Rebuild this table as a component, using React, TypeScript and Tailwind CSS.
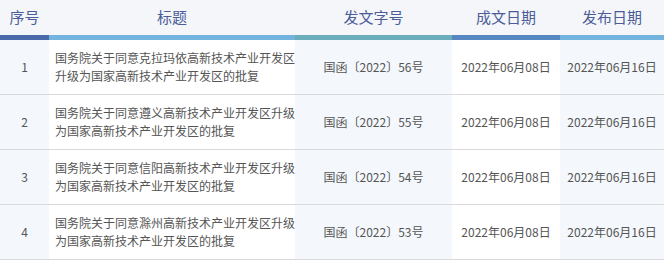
const cols = "grid grid-cols-[49px_246px_157px_108px_104px]";

const rows = [
  { no: 1, title: "国务院关于同意克拉玛依高新技术产业开发区升级为国家高新技术产业开发区的批复", doc: "国函〔2022〕56号" },
  { no: 2, title: "国务院关于同意遵义高新技术产业开发区升级为国家高新技术产业开发区的批复", doc: "国函〔2022〕55号" },
  { no: 3, title: "国务院关于同意信阳高新技术产业开发区升级为国家高新技术产业开发区的批复", doc: "国函〔2022〕54号" },
  { no: 4, title: "国务院关于同意滁州高新技术产业开发区升级为国家高新技术产业开发区的批复", doc: "国函〔2022〕53号" },
];

const heads = [
  { label: "序号", bar: "bg-[#4b6aa9]" },
  { label: "标题", bar: "bg-[#72b4de]" },
  { label: "发文字号", bar: "bg-[#6aaebb]" },
  { label: "成文日期", bar: "bg-[#5687c1]" },
  { label: "发布日期", bar: "bg-[#72b4de]" },
];

export default function App() {
  return (
    <div className="w-[670px] h-[262px] bg-white overflow-hidden" style={{ fontFamily: '"Noto Sans CJK SC", "Noto Sans", sans-serif' }}>
      <div className="w-[664px]">
        {/* Header */}
        <div className={`${cols} bg-[#f4f6fa]`}>
          {heads.map((h) => (
            <div key={h.label} className="flex flex-col">
              <div className="h-[35px] flex items-center justify-center text-[15px] text-[#4b5c98]">
                {h.label}
              </div>
              <div className={`h-[5px] ${h.bar}`} />
            </div>
          ))}
        </div>

        {/* Body */}
        {rows.map((r) => (
          <div key={r.no} className={`${cols} h-[55px] border-b border-[#dadada] text-[12px] text-[#555]`}>
            <div className="bg-[#f4f8fc] flex items-center justify-center">{r.no}</div>
            <div className="bg-white flex items-center pl-[6px] leading-[18px]">{r.title}</div>
            <div className="bg-[#f4f8fc] flex items-center justify-center">{r.doc}</div>
            <div className="bg-white flex items-center justify-center">2022年06月08日</div>
            <div className="bg-[#f4f8fc] flex items-center justify-center">2022年06月16日</div>
          </div>
        ))}
      </div>
    </div>
  );
}
